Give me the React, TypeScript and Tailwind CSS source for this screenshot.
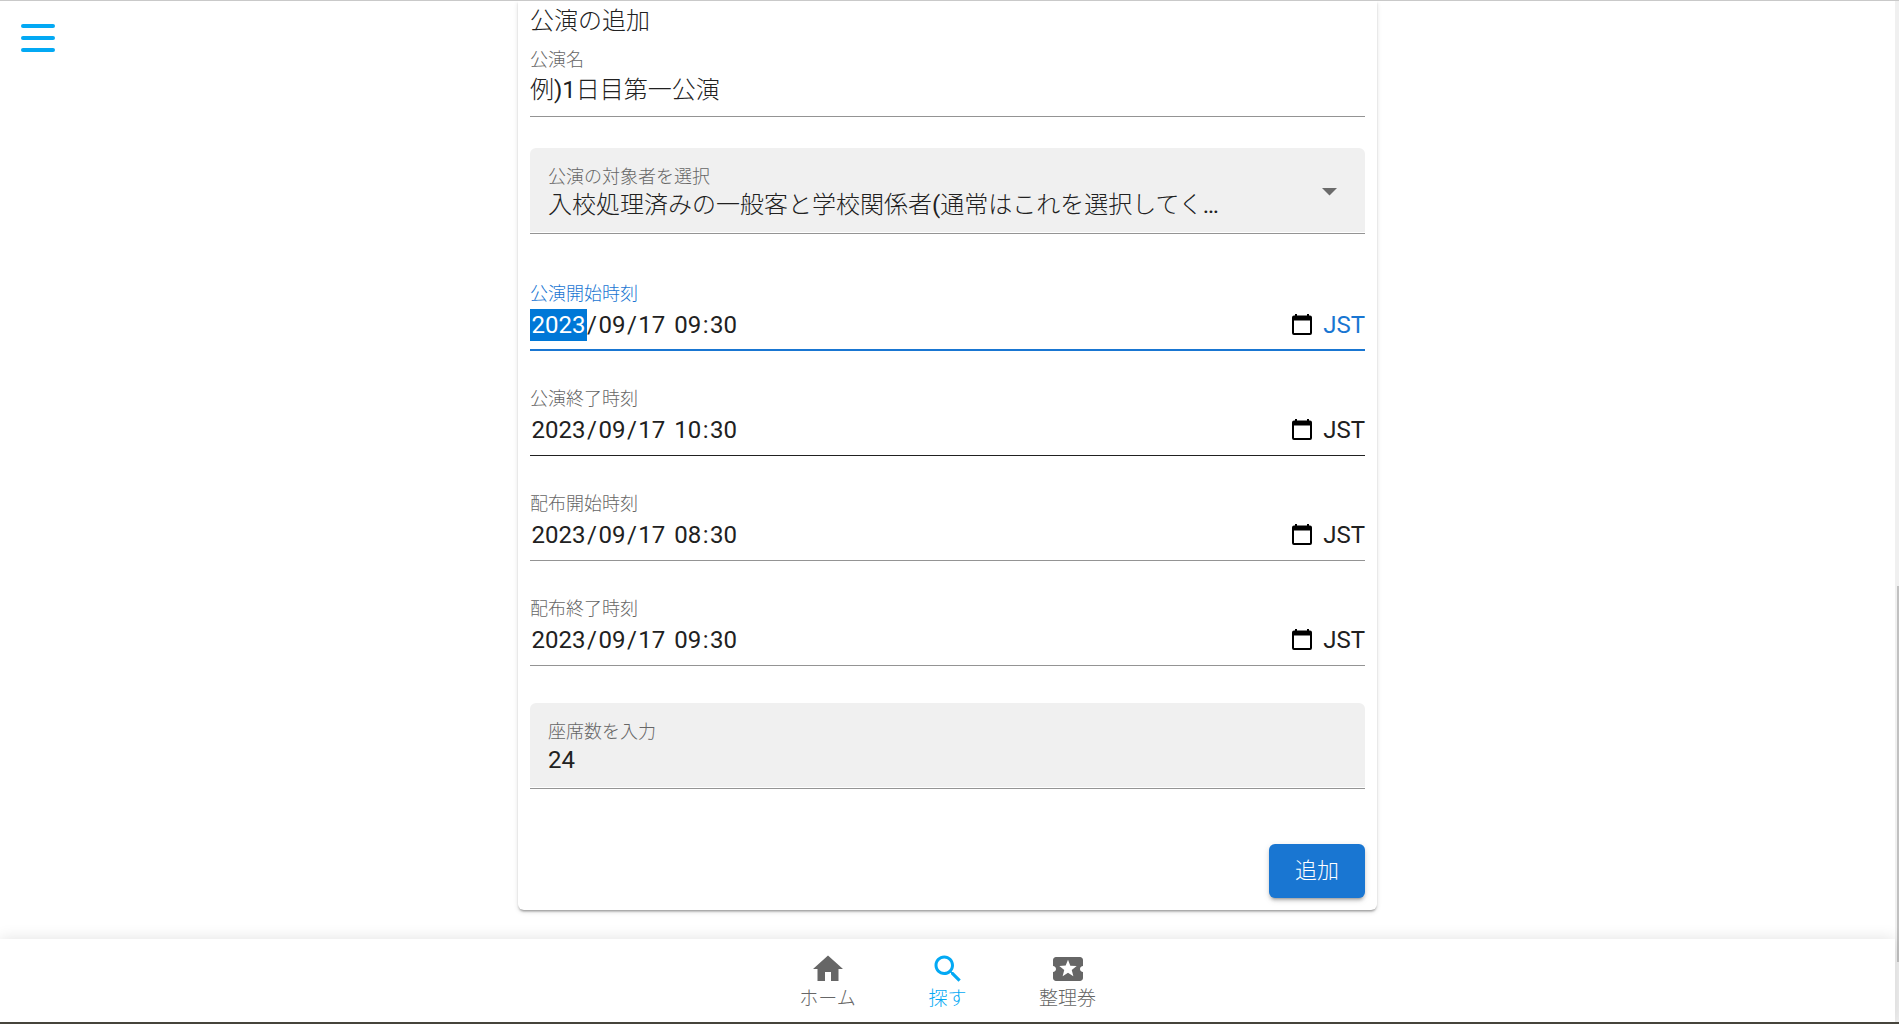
import { useState } from "react";

type DateParts = { y: string; m: string; d: string; h: string; min: string };

function CalendarIcon() {
  return (
    <svg width="20" height="21" viewBox="0 0 20 21" aria-hidden="true" className="block">
      <path
        fill="#000"
        fillRule="evenodd"
        d="M3 0h2v1.500h10V0h2v1.500h1a2 2 0 0 1 2 2V19a2 2 0 0 1-2 2H2a2 2 0 0 1-2-2V3.500a2 2 0 0 1 2-2h1zM2 6.500V19h16V6.500z"
      />
    </svg>
  );
}

const segment = "h-8 p-0 text-center outline-none";

function DateField({
  id,
  label,
  parts,
  state = "idle",
}: {
  id: string;
  label: string;
  parts: DateParts;
  state?: "idle" | "focus" | "hover";
}) {
  const focus = state === "focus";
  const border = focus
    ? "border-b-2 border-[#1976d2] pb-2"
    : state === "hover"
      ? "border-b border-[#212121] pb-[9px]"
      : "border-b border-[#949494] pb-[9px]";
  return (
    <div role="group" aria-labelledby={id} className="mb-[30px] flex h-[75px] flex-col">
      <span
        id={id}
        className={`h-[33px] text-lg leading-9 ${focus ? "text-[#1976d2]" : "text-[#666]"}`}
      >
        {label}
      </span>
      <div className={`flex flex-1 items-center ${border}`}>
        <input
          aria-label={`${label} 年`}
          defaultValue={parts.y}
          className={`${segment} w-[57px] ${focus ? "bg-[#0078d7] text-white" : "bg-transparent"}`}
        />
        <span>/</span>
        <input aria-label={`${label} 月`} defaultValue={parts.m} className={`${segment} w-[30px]`} />
        <span>/</span>
        <input aria-label={`${label} 日`} defaultValue={parts.d} className={`${segment} w-[30px]`} />
        <span className="whitespace-pre"> </span>
        <input aria-label={`${label} 時`} defaultValue={parts.h} className={`${segment} w-[30px]`} />
        <span>:</span>
        <input aria-label={`${label} 分`} defaultValue={parts.min} className={`${segment} w-[30px]`} />
        <button type="button" aria-label={`${label} カレンダーを開く`} className="mb-px ml-auto">
          <CalendarIcon />
        </button>
        <span className={`ml-[11px] ${focus ? "text-[#1976d2]" : ""}`}>JST</span>
      </div>
    </div>
  );
}

const navItems = [
  {
    label: "ホーム",
    active: false,
    path: "M10 20v-6h4v6h5v-8h3L12 3 2 12h3v8z",
  },
  {
    label: "探す",
    active: true,
    path: "M15.500 14h-.79l-.28-.27C15.410 12.590 16 11.110 16 9.500 16 5.910 13.090 3 9.500 3S3 5.910 3 9.500 5.910 16 9.500 16c1.610 0 3.090-.59 4.230-1.570l.27.28v.79l5 4.990L20.490 19l-4.990-5zm-6 0C7.010 14 5 11.990 5 9.500S7.010 5 9.500 5 14 7.010 14 9.500 11.990 14 9.500 14z",
  },
  {
    label: "整理券",
    active: false,
    path: "M20 12c0-1.100.9-2 2-2V6c0-1.100-.9-2-2-2H4c-1.100 0-1.990.9-1.990 2v4c1.100 0 1.990.9 1.990 2s-.89 2-2 2v4c0 1.100.9 2 2 2h16c1.100 0 2-.9 2-2v-4c-1.100 0-2-.9-2-2zm-4.420 4.800L12 14.500l-3.580 2.300 1.080-4.120-3.290-2.690 4.240-.25L12 5.800l1.540 3.950 4.240.25-3.290 2.690 1.090 4.110z",
  },
];

export default function App() {
  const [name, setName] = useState("例)1日目第一公演");
  const [seats, setSeats] = useState("24");

  return (
    <div className="flex h-screen border-t border-b-2 border-t-[#c9c9c9] border-b-[#4a483f] bg-white font-[Roboto,'Noto_Sans_CJK_JP_Light','Noto_Sans_CJK_JP_DemiLight','Noto_Sans_CJK_JP',sans-serif] text-2xl leading-8 text-[#212121]">
      <div className="relative flex min-w-0 flex-1 flex-col">
        <button
          type="button"
          aria-label="メニュー"
          className="absolute top-[23px] left-[21px] flex w-[34px] flex-col gap-2"
        >
          <span className="h-1 rounded-full bg-[#03a9f4]" />
          <span className="h-1 rounded-full bg-[#03a9f4]" />
          <span className="h-1 rounded-full bg-[#03a9f4]" />
        </button>

        <main className="min-h-0 flex-1 overflow-hidden px-4">
          <form
            onSubmit={(e) => e.preventDefault()}
            className="mx-auto max-w-[859px] rounded-b-md px-3 pt-1 pb-3 shadow-[0_3px_2px_-2px_rgba(0,0,0,0.2),0_2px_2px_0_rgba(0,0,0,0.14),0_2px_5px_0_rgba(0,0,0,0.12)]"
          >
            <h2>公演の追加</h2>

            <div className="mt-[9px] mb-[31px] flex flex-col border-b border-[#949494] pb-[10px]">
              <label htmlFor="name" className="text-lg leading-7 text-[#666]">
                公演名
              </label>
              <input
                id="name"
                value={name}
                onChange={(e) => setName(e.target.value)}
                className="h-8 w-full outline-none"
              />
            </div>

            <div className="border-b border-[#949494] pb-px">
              <div className="relative h-[84px] rounded-t-md bg-[#f0f0f0] pt-[15px]">
                <label htmlFor="target" className="block px-[18px] text-lg leading-7 text-[#666]">
                  公演の対象者を選択
                </label>
                <select
                  id="target"
                  className="block h-7 w-full appearance-none truncate bg-transparent pr-[130px] pl-[18px] leading-7 outline-none"
                >
                  <option>入校処理済みの一般客と学校関係者(通常はこれを選択してください)</option>
                </select>
                <svg
                  className="pointer-events-none absolute top-10 right-7"
                  width="15"
                  height="8"
                  viewBox="0 0 15 8"
                  aria-hidden="true"
                >
                  <path d="M0 0h15L7.500 7.500z" fill="#6b6b6b" />
                </svg>
              </div>
            </div>

            <div className="pt-[42px]">
              <DateField id="show-start" label="公演開始時刻" state="focus" parts={{ y: "2023", m: "09", d: "17", h: "09", min: "30" }} />
              <DateField id="show-end" label="公演終了時刻" state="hover" parts={{ y: "2023", m: "09", d: "17", h: "10", min: "30" }} />
              <DateField id="dist-start" label="配布開始時刻" parts={{ y: "2023", m: "09", d: "17", h: "08", min: "30" }} />
              <DateField id="dist-end" label="配布終了時刻" parts={{ y: "2023", m: "09", d: "17", h: "09", min: "30" }} />
            </div>

            <div className="mt-[37px] border-b border-[#949494] pb-px">
              <div className="h-[84px] rounded-t-md bg-[#f0f0f0] px-[18px] pt-[15px]">
                <label htmlFor="seats" className="block text-lg leading-7 text-[#666]">
                  座席数を入力
                </label>
                <input
                  id="seats"
                  value={seats}
                  onChange={(e) => setSeats(e.target.value)}
                  className="block h-7 w-full bg-transparent outline-none"
                />
              </div>
            </div>

            <div className="mt-[55px] flex justify-end">
              <button
                type="submit"
                className="h-[54px] w-24 rounded-md bg-[#1976d2] text-[22px] text-white shadow-[0_4px_2px_-3px_rgba(0,0,0,0.2),0_3px_3px_0_rgba(0,0,0,0.14),0_2px_7px_0_rgba(0,0,0,0.12)]"
              >
                追加
              </button>
            </div>
          </form>
        </main>

        <nav className="flex h-[83px] shrink-0 justify-center bg-white pt-3 shadow-[0_0_15px_rgba(0,0,0,0.12)]">
          {navItems.map((item) => (
            <a
              key={item.label}
              href="#"
              className={`flex w-[120px] flex-col items-center text-[19px] leading-6 ${item.active ? "text-[#03a9f4]" : "text-[#666]"}`}
            >
              <svg width="36" height="36" viewBox="0 0 24 24" fill="currentColor" aria-hidden="true">
                <path d={item.path} />
              </svg>
              {item.label}
            </a>
          ))}
        </nav>
      </div>

      <div className="flex w-1 flex-col items-end bg-[#f0f0f0]" aria-hidden="true">
        <div className="grow-[585]" />
        <div className="w-[2px] grow-[376] bg-[#c1c1c1]" />
        <div className="grow-[60]" />
      </div>
    </div>
  );
}
